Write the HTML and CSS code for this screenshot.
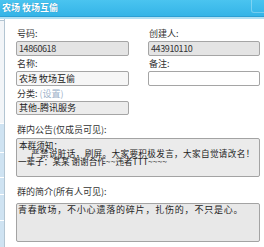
FILE: index.html
```html
<!DOCTYPE html>
<html lang="zh-CN">
<head>
<meta charset="utf-8">
<title>群资料</title>
<link rel="stylesheet" href="styles.css">
</head>
<body>
<div class="win">
  <div class="titlebar">
    <span class="title">农场 牧场互偷</span>
    <span class="tbtn"></span>
  </div>
  <div class="titleline"></div>
  <div class="body">
    <div class="side">
      <div class="side-top"></div>
      <div class="tab t1"></div>
      <div class="tab t2"></div>
      <div class="tab t3"></div>
      <div class="tab t4"></div>
      <div class="tab t5"></div>
    </div>
    <div class="main">
      <div class="grid">
        <div class="col">
          <div class="label">号码:</div>
          <div class="field ro num">14860618</div>
          <div class="label">名称:</div>
          <div class="field soft">农场 牧场互偷</div>
          <div class="label">分类: <span class="link">(设置)</span></div>
          <div class="field ro2 short">其他-腾讯服务</div>
        </div>
        <div class="col">
          <div class="label">创建人:</div>
          <div class="field ro num">443910110</div>
          <div class="label">备注:</div>
          <div class="field"></div>
        </div>
      </div>
      <div class="label sec">群内公告(仅成员可见):</div>
      <div class="box notice">
        <div class="line l1">本群须知：</div>
        <div class="line l2">严禁说脏话，刷屏。大家要积极发言，大家自觉请改名！</div>
        <div class="line l3">一辈子：某某 谢谢合作~~违者TTT~~~~</div>
      </div>
      <div class="label sec">群的简介(所有人可见):</div>
      <div class="box intro">青春散场，不小心遗落的碎片，扎伤的，不只是心。</div>
    </div>
  </div>
</div>
</body>
</html>
```
FILE: styles.css
```css
html, body {
  margin: 0;
  padding: 0;
}
body {
  width: 264px;
  height: 247px;
  overflow: hidden;
  background: #ffffff;
  font-family: "Noto Sans CJK SC", "Liberation Sans", sans-serif;
  font-size: 9px;
  color: #333333;
}
.titlebar {
  height: 16px;
  border-bottom: 1px solid #2b9fd4;
  background: linear-gradient(#4ac4f0, #34b4e7);
  display: flex;
  justify-content: space-between;
  align-items: flex-start;
}
.title {
  color: #ffffff;
  font-weight: bold;
  font-size: 9px;
  line-height: 15px;
  padding-left: 2px;
  text-shadow: 0 0 1px #1d84b8;
}
.tbtn {
  width: 12px;
  height: 12px;
  border: 1px solid rgba(255, 255, 255, 0.3);
  border-top: none;
  border-right: none;
  border-radius: 0 0 0 3px;
}
.titleline {
  height: 2px;
  background: #b2e0f3;
}
.body {
  display: flex;
  height: 228px;
}
.side {
  width: 4px;
  border-right: 1px solid #b3c5d2;
  padding-top: 1px;
  display: flex;
  flex-direction: column;
}
.side-top {
  height: 102px;
  border-top: 1px solid #b3c5d2;
  background: #f2f5f8;
}
.tab {
  background: #cfe3f2;
  border-top: 1px solid #ffffff;
}
.t1 { height: 28px; }
.t2 { height: 24px; }
.t3 { height: 16px; }
.t4 { height: 25px; }
.t5 { flex: 1; }
.main {
  flex: 1;
  padding: 7px 4px 0 11px;
}
.grid {
  display: grid;
  grid-template-columns: 113px 112px;
  column-gap: 19px;
}
.label {
  height: 15px;
  line-height: 15px;
  padding-left: 1px;
  color: #333333;
  white-space: nowrap;
}
.link {
  color: #9db2c9;
}
.field {
  height: 13px;
  line-height: 13px;
  border: 1px solid #a5a5a5;
  border-radius: 2px;
  background: #ffffff;
  padding-left: 2px;
  color: #222222;
  white-space: nowrap;
  overflow: hidden;
}
.ro {
  background: #e4e4e4;
}
.ro2 {
  background: #ececec;
}
.soft {
  background: #f6f6f6;
}
.num {
  letter-spacing: -0.4px;
  color: #333333;
}
.short {
  height: 12px;
  line-height: 12px;
  width: 109px;
}
.sec {
  margin-top: 7px;
  height: 16px;
  line-height: 16px;
}
.box {
  border: 1px solid #a3a3a3;
  border-radius: 2px;
  height: 37px;
  color: #222222;
  white-space: nowrap;
  overflow: hidden;
}
.notice {
  background: #ebebeb;
  padding: 2px 0 0 1px;
  height: 35px;
  font-size: 8.6px;
}
.line {
  line-height: 8px;
  height: 8px;
}
.l1 { padding-left: 1px; }
.l2 { padding-left: 13px; letter-spacing: 0.35px; }
.l3 { padding-left: 0; }
.intro {
  margin-top: 3px;
  background: #e8e8e8;
  padding: 1px 0 0 1px;
  height: 36px;
  line-height: 9px;
  letter-spacing: 0.8px;
  color: #1e1e1e;
}
```
